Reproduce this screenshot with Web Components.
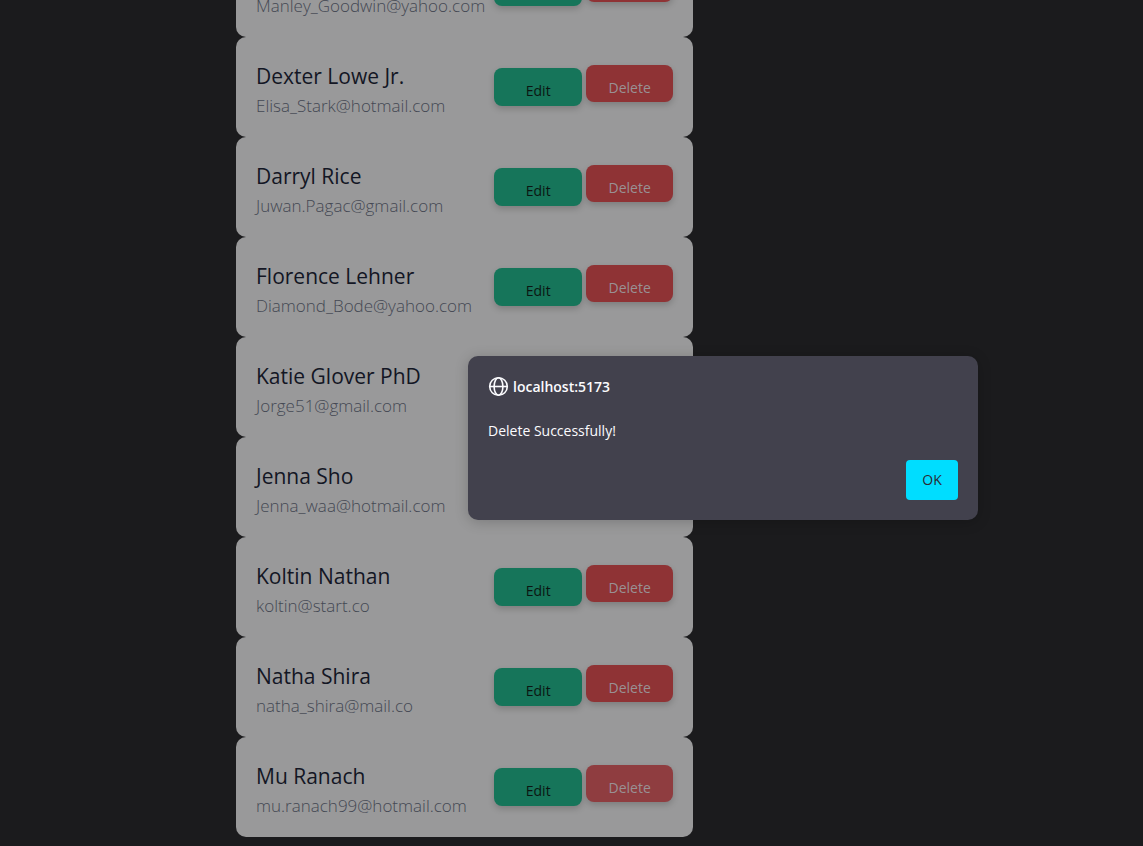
<!DOCTYPE html>
<html lang="en">
<head>
<meta charset="utf-8">
<title>Users</title>
<style>
body { margin: 0; background: #1b1b1d; font-family: "Open Sans", "Noto Sans", sans-serif; }
</style>
</head>
<body>
<users-page></users-page>
<script>
const define = (name, html, setup) => {
  const template = document.createElement('template');
  template.innerHTML = html;
  customElements.define(name, class extends HTMLElement {
    constructor() {
      super();
      this.attachShadow({ mode: 'open' }).append(template.content.cloneNode(true));
    }
    connectedCallback() { if (setup) setup(this, this.shadowRoot); }
  });
};

define('action-button', `
<style>
:host { display: block; }
:host([kind=edit]) { --fill: #16755a; --ink: #0b1512; --h: 38px; --w: 88px; margin-top: 3px; }
:host([kind=delete]) { --fill: #8f3335; --ink: #999194; --h: 37px; --w: 87px; }
:host([kind=delete][active]) { --fill: #8f3d40; }
button {
  display: block; box-sizing: border-box; width: var(--w); height: var(--h);
  padding: 8px 0 0; border: 0; border-radius: 8px;
  background: var(--fill); color: var(--ink);
  font: 400 14px/20px "Open Sans", "Noto Sans", sans-serif;
  box-shadow: 0 3px 6px rgba(0, 0, 0, .18);
}
</style>
<button type="button"><slot></slot></button>`);

define('user-card', `
<style>
:host { display: block; flex: none; }
article {
  display: flex; justify-content: space-between; box-sizing: border-box;
  height: 100px; padding: 22px 20px 18px; border-radius: 10px;
  background: #99999a; white-space: nowrap;
}
h2 { margin: 0; font-size: 21px; line-height: 34px; font-weight: 400; color: #131624; }
p { margin: 0; font-size: 17px; line-height: 26px; font-weight: 350; color: #444853; }
.text { flex: 1; min-width: 0; }
.actions { display: flex; align-items: flex-start; gap: 4px; padding-top: 6px; }
</style>
<article>
  <div class="text"><h2><slot name="name"></slot></h2><p><slot name="email"></slot></p></div>
  <div class="actions">
    <action-button kind="edit">Edit</action-button>
    <action-button kind="delete" class="delete">Delete</action-button>
  </div>
</article>`, (host, root) => {
  root.querySelector('.delete').toggleAttribute('active', host.hasAttribute('active'));
  if (host.hasAttribute('inert')) root.querySelector('.actions').replaceChildren();
});

define('alert-dialog', `
<style>
:host { display: block; position: absolute; top: 356px; left: 468px; width: 510px; }
section {
  display: flex; flex-direction: column; box-sizing: border-box;
  padding: 20px; border-radius: 10px; background: #42414d; color: #fbfbfe;
  font-size: 14px; line-height: 20px; box-shadow: 0 2px 14px rgba(0, 0, 0, .2);
}
header { display: flex; align-items: center; gap: 4px; font-weight: 600; }
svg { display: block; width: 21px; height: 21px; }
p { margin: 24px 0 19px; }
button {
  align-self: flex-end; width: 52px; height: 40px; padding: 0; border: 0; border-radius: 4px;
  background: #00ddff; color: #2b2a33; font: 500 14px/20px "Open Sans", "Noto Sans", sans-serif;
}
</style>
<section role="alertdialog" aria-labelledby="origin" aria-describedby="message">
  <header>
    <svg viewBox="0 0 21 21" fill="none" stroke="currentColor" stroke-width="1.6" aria-hidden="true">
      <circle cx="10.5" cy="10.5" r="8.8"/>
      <ellipse cx="10.5" cy="10.5" rx="4.4" ry="8.8"/>
      <path d="M1.7 10.5h17.6"/>
    </svg>
    <span id="origin"><slot name="origin"></slot></span>
  </header>
  <p id="message"><slot></slot></p>
  <button type="button">OK</button>
</section>`);

define('users-page', `
<style>
:host { display: block; }
main {
  position: relative; display: flex; flex-direction: column; justify-content: flex-end;
  box-sizing: border-box; height: 100vh; overflow: hidden; padding: 0 0 9px 236px;
}
.list { width: 40vw; min-width: 457px; display: flex; flex-direction: column; }
</style>
<main>
  <div class="list"></div>
  <alert-dialog><span slot="origin">localhost:5173</span>Delete Successfully!</alert-dialog>
</main>`, (host, root) => {
  const users = [
    ['', 'Manley_Goodwin@yahoo.com'],
    ['Dexter Lowe Jr.', 'Elisa_Stark@hotmail.com'],
    ['Darryl Rice', 'Juwan.Pagac@gmail.com'],
    ['Florence Lehner', 'Diamond_Bode@yahoo.com'],
    ['Katie Glover PhD', 'Jorge51@gmail.com', 'inert'],
    ['Jenna Sho', 'Jenna_waa@hotmail.com', 'inert'],
    ['Koltin Nathan', 'koltin@start.co'],
    ['Natha Shira', 'natha_shira@mail.co'],
    ['Mu Ranach', 'mu.ranach99@hotmail.com', 'active'],
  ];
  const slotted = (slot, text) => {
    const span = document.createElement('span');
    span.slot = slot;
    span.textContent = text || '\u00a0';
    return span;
  };
  users.forEach(([name, email, state]) => {
    const card = document.createElement('user-card');
    card.append(slotted('name', name), slotted('email', email));
    if (state) card.setAttribute(state, '');
    root.querySelector('.list').append(card);
  });
});
</script>
</body>
</html>
